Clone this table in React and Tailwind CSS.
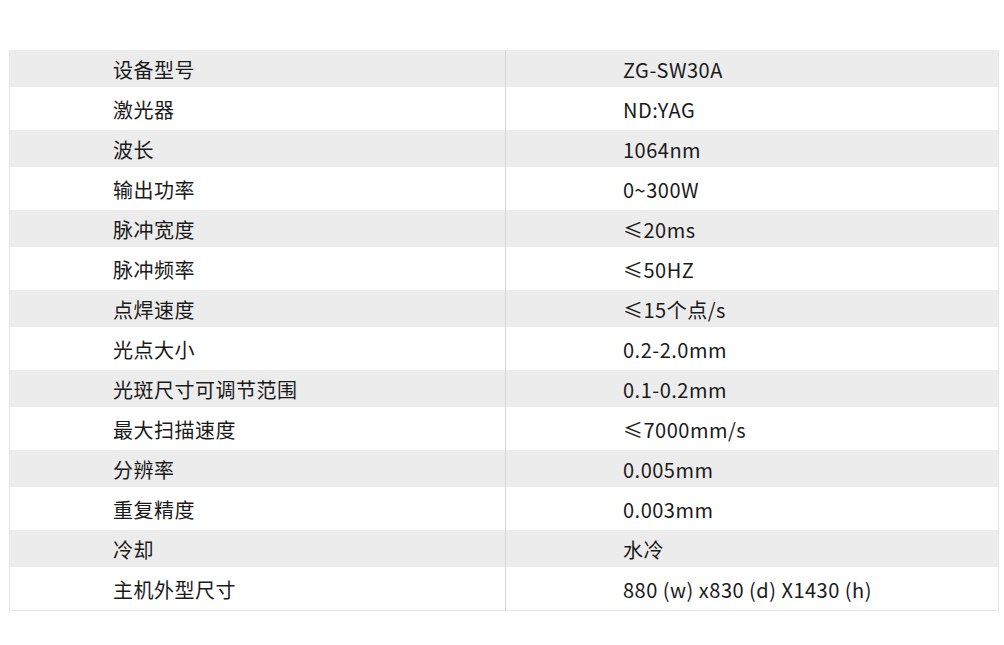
import React from "react";

const rows = [
  ["设备型号", "ZG-SW30A"],
  ["激光器", "ND:YAG"],
  ["波长", "1064nm"],
  ["输出功率", "0~300W"],
  ["脉冲宽度", "≤20ms"],
  ["脉冲频率", "≤50HZ"],
  ["点焊速度", "≤15个点/s"],
  ["光点大小", "0.2-2.0mm"],
  ["光斑尺寸可调节范围", "0.1-0.2mm"],
  ["最大扫描速度", "≤7000mm/s"],
  ["分辨率", "0.005mm"],
  ["重复精度", "0.003mm"],
  ["冷却", "水冷"],
  ["主机外型尺寸", "880 (w) x830 (d) X1430 (h)"],
];

export default function App() {
  return (
    <div
      className="w-[1004px] h-[645px] bg-white pt-[50px] pl-[9px]"
      style={{ fontFamily: '"Noto Sans CJK SC", "Noto Sans", sans-serif' }}
    >
      <div className="w-[990px] border-x border-b border-[#e6e6e6] flex flex-col">
        {rows.map(([k, v], i) => {
          const grey = i % 2 === 0;
          return (
            <div
              key={i}
              className={
                grey
                  ? "flex h-[37px] bg-[#ececec] text-[20px] tracking-[0.5px] text-[#1a1a1a]"
                  : "flex h-[43px] bg-white text-[20px] tracking-[0.5px] text-[#1a1a1a]"
              }
            >
              <div
                className={
                  grey
                    ? "w-[495px] flex items-center pl-[103px] pt-[2px]"
                    : "w-[495px] flex items-center pl-[103px] pt-[3px]"
                }
              >
                {k}
              </div>
              <div className="w-px bg-[#d4d4d4]" />
              <div
                className={
                  grey
                    ? "flex-1 flex items-center pl-[117px] pt-[2px]"
                    : "flex-1 flex items-center pl-[117px] pt-[3px]"
                }
              >
                {v}
              </div>
            </div>
          );
        })}
      </div>
    </div>
  );
}
